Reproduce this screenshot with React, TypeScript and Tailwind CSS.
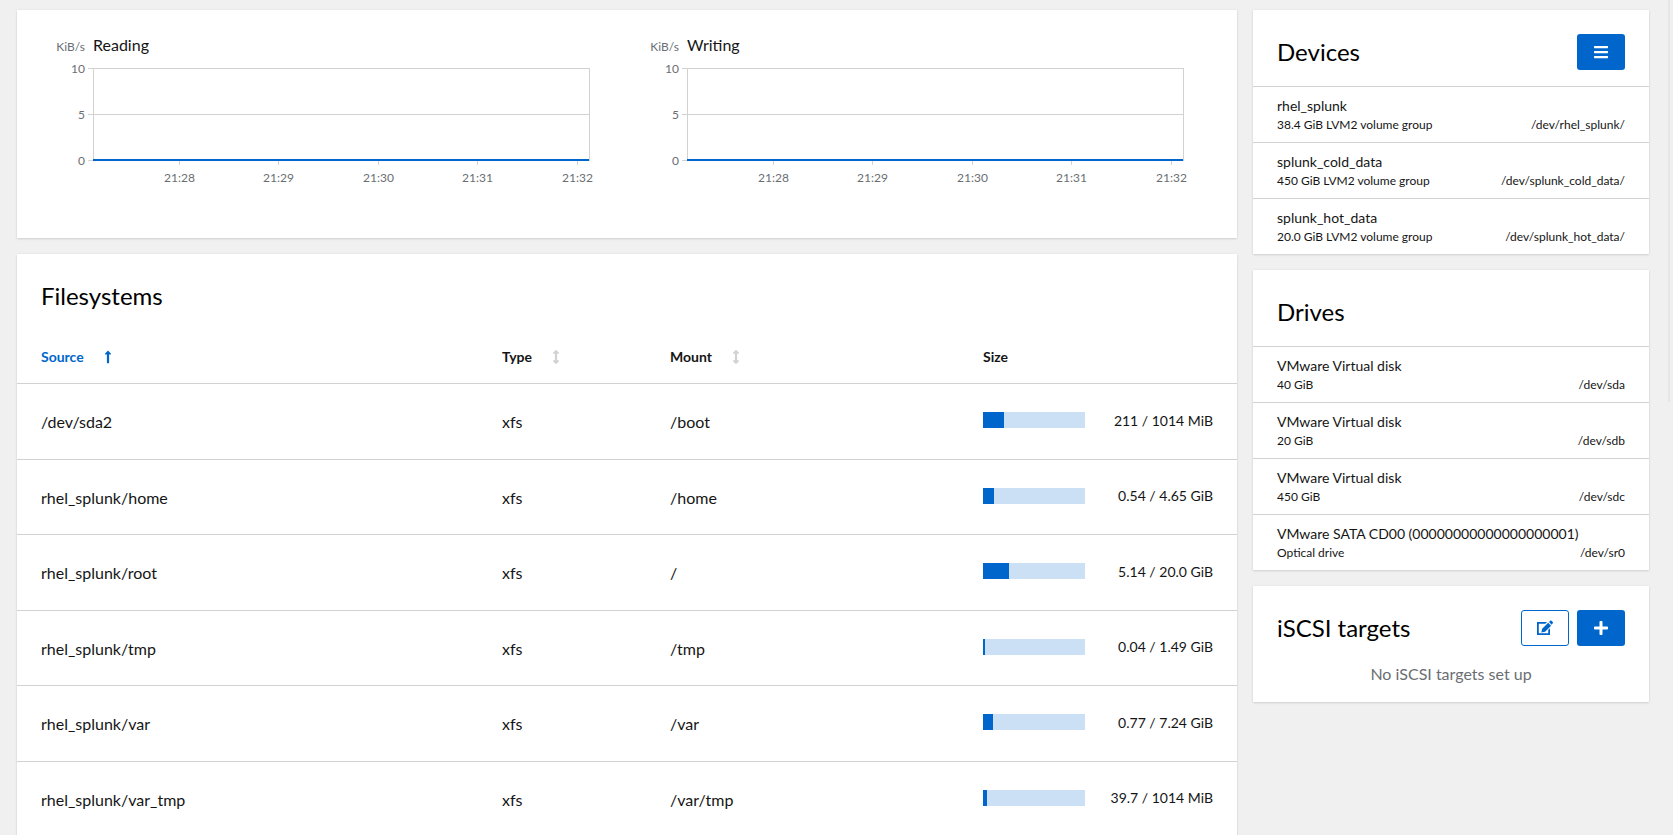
import React from "react";
import { FaArrowsAltV, FaBars, FaLongArrowAltUp, FaPlus } from "react-icons/fa";

type StorageItem = { name: string; detail: string; path: string };
type Filesystem = { source: string; type: string; mount: string; usage: number; label: string };

const devices: StorageItem[] = [
  { name: "rhel_splunk", detail: "38.4 GiB LVM2 volume group", path: "/dev/rhel_splunk/" },
  { name: "splunk_cold_data", detail: "450 GiB LVM2 volume group", path: "/dev/splunk_cold_data/" },
  { name: "splunk_hot_data", detail: "20.0 GiB LVM2 volume group", path: "/dev/splunk_hot_data/" },
];

const drives: StorageItem[] = [
  { name: "VMware Virtual disk", detail: "40 GiB", path: "/dev/sda" },
  { name: "VMware Virtual disk", detail: "20 GiB", path: "/dev/sdb" },
  { name: "VMware Virtual disk", detail: "450 GiB", path: "/dev/sdc" },
  { name: "VMware SATA CD00 (00000000000000000001)", detail: "Optical drive", path: "/dev/sr0" },
];

// usage is the used share of the filesystem, in percent
const filesystems: Filesystem[] = [
  { source: "/dev/sda2", type: "xfs", mount: "/boot", usage: 20.8, label: "211 / 1014 MiB" },
  { source: "rhel_splunk/home", type: "xfs", mount: "/home", usage: 11, label: "0.54 / 4.65 GiB" },
  { source: "rhel_splunk/root", type: "xfs", mount: "/", usage: 25.7, label: "5.14 / 20.0 GiB" },
  { source: "rhel_splunk/tmp", type: "xfs", mount: "/tmp", usage: 2.2, label: "0.04 / 1.49 GiB" },
  { source: "rhel_splunk/var", type: "xfs", mount: "/var", usage: 10, label: "0.77 / 7.24 GiB" },
  { source: "rhel_splunk/var_tmp", type: "xfs", mount: "/var/tmp", usage: 3.9, label: "39.7 / 1014 MiB" },
];

const timeTicks = [
  { x: 146.5, label: "21:28" },
  { x: 245.5, label: "21:29" },
  { x: 345.5, label: "21:30" },
  { x: 444.5, label: "21:31" },
  { x: 544.5, label: "21:32" },
];

const valueTicks = [
  { y: 42.5, label: "10" },
  { y: 88.5, label: "5" },
  { y: 134.5, label: "0" },
];

function Card({ children }: { children: React.ReactNode }) {
  return (
    <section className="bg-white shadow-[0_1px_2px_rgba(3,3,3,0.12),0_0_2px_rgba(3,3,3,0.06)]">{children}</section>
  );
}

function CardHeader({ title, children }: { title: string; children?: React.ReactNode }) {
  return (
    <div className="flex items-center justify-between px-6 pt-6 pb-4">
      <h2 className="text-2xl leading-9 text-black">{title}</h2>
      <div className="flex gap-2">{children}</div>
    </div>
  );
}

function StorageList({ items }: { items: StorageItem[] }) {
  return (
    <ul>
      {items.map((item) => (
        <li key={item.path} className="border-t border-[#d2d2d2] px-6 py-2">
          <div className="text-sm leading-[21px]">{item.name}</div>
          <div className="flex justify-between text-xs leading-[18px]">
            <span>{item.detail}</span>
            <span>{item.path}</span>
          </div>
        </li>
      ))}
    </ul>
  );
}

function RateChart({ title }: { title: string }) {
  return (
    <svg viewBox="0 0 594 196" className="block w-full" role="img" aria-label={title}>
      <g fill="#6a6e73" fontSize="12">
        <text x="52" y="25" textAnchor="end">KiB/s</text>
        {valueTicks.map((t) => (
          <text key={t.label} x="52" y={t.y + 4.5} textAnchor="end">{t.label}</text>
        ))}
        {timeTicks.map((t) => (
          <text key={t.label} x={t.x} y="156" textAnchor="middle">{t.label}</text>
        ))}
      </g>
      <text x="60" y="25" fontSize="16" fill="#151515">{title}</text>
      <g stroke="#d2d2d2" strokeWidth="1">
        {valueTicks.map((t) => (
          <line key={t.label} x1="55" x2="557" y1={t.y} y2={t.y} />
        ))}
        {timeTicks.map((t) => (
          <line key={t.label} x1={t.x} x2={t.x} y1="134" y2="139" />
        ))}
        <line x1="60.5" x2="60.5" y1="42" y2="134" />
        <line x1="556.5" x2="556.5" y1="42" y2="135" />
      </g>
      <rect x="60" y="133" width="496" height="2" fill="#0066cc" />
    </svg>
  );
}

function EditIcon() {
  return (
    <svg viewBox="0 0 16 16" className="size-4" fill="currentColor" aria-hidden="true">
      <path d="M0 2h10L8.300 3.800H1.800v9.400h9.400V10L13 8.200V15H0z" />
      <path d="M4.300 12.600l.9-3.800 6-6 2.900 2.900-6 6z" />
      <path d="M12 2l1.200-1.200a1 1 0 0 1 1.400 0l1.100 1.100a1 1 0 0 1 0 1.400L14.700 4.700z" />
    </svg>
  );
}

function SortHeader({ label, active }: { label: string; active?: boolean }) {
  return active ? (
    <button type="button" className="flex items-center gap-5 font-bold text-[#0066cc]">
      {label}
      <FaLongArrowAltUp className="h-3.5 w-2" aria-hidden="true" />
    </button>
  ) : (
    <button type="button" className="flex items-center gap-5 font-bold">
      {label}
      <FaArrowsAltV className="h-3.5 w-2 text-[#d2d2d2]" aria-hidden="true" />
    </button>
  );
}

export default function App() {
  return (
    <div className="relative flex h-screen items-start gap-4 overflow-hidden bg-[#f0f0f0] pt-2.5 pr-6 pl-[17px] font-['Lato',sans-serif] text-[#151515]">
      <main className="flex min-w-0 flex-1 flex-col gap-4">
        <Card>
          <div className="grid grid-cols-2 p-4">
            <RateChart title="Reading" />
            <RateChart title="Writing" />
          </div>
        </Card>

        <Card>
          <h2 className="px-6 pt-6 text-2xl leading-9 text-black">Filesystems</h2>
          <table className="w-full table-fixed text-left">
            <thead className="text-sm leading-[21px]">
              <tr className="border-b border-[#d2d2d2]">
                <th className="pt-8 pb-4 pl-6" aria-sort="ascending"><SortHeader label="Source" active /></th>
                <th className="w-[168px] pt-8 pb-4"><SortHeader label="Type" /></th>
                <th className="w-[313px] pt-8 pb-4"><SortHeader label="Mount" /></th>
                <th className="w-[254px] pt-8 pb-4 font-bold">Size</th>
              </tr>
            </thead>
            <tbody>
              {filesystems.map((fs) => (
                <tr key={fs.source} className="border-b border-[#d2d2d2] odd:h-[76px] even:h-[75px]">
                  <td className="pt-px pl-6">{fs.source}</td>
                  <td className="pt-px">{fs.type}</td>
                  <td className="pt-px">{fs.mount}</td>
                  <td className="pr-6 pb-[3px]">
                    <div className="flex items-center justify-between">
                      <div
                        role="progressbar"
                        aria-label={`${fs.source} usage`}
                        aria-valuenow={fs.usage}
                        className="h-4 w-[102px] bg-[#cce0f5]"
                      >
                        <div className="h-full bg-[#0066cc]" style={{ width: `${fs.usage}%` }} />
                      </div>
                      <span className="text-sm leading-[21px]">{fs.label}</span>
                    </div>
                  </td>
                </tr>
              ))}
            </tbody>
          </table>
        </Card>
      </main>

      <aside className="flex w-[396px] shrink-0 flex-col gap-4">
        <Card>
          <CardHeader title="Devices">
            <button type="button" aria-label="Device actions" className="flex h-9 w-12 items-center justify-center rounded-[3px] bg-[#0066cc] text-white">
              <FaBars className="size-4" />
            </button>
          </CardHeader>
          <StorageList items={devices} />
        </Card>

        <Card>
          <CardHeader title="Drives" />
          <StorageList items={drives} />
        </Card>

        <Card>
          <CardHeader title="iSCSI targets">
            <button type="button" aria-label="Edit initiator name" className="flex h-9 w-12 items-center justify-center rounded-[3px] border border-[#0066cc] bg-white text-[#0066cc]">
              <EditIcon />
            </button>
            <button type="button" aria-label="Add iSCSI portal" className="flex h-9 w-12 items-center justify-center rounded-[3px] bg-[#0066cc] text-white">
              <FaPlus className="size-4" />
            </button>
          </CardHeader>
          <p className="pb-4 text-center text-base text-[#6a6e73]">No iSCSI targets set up</p>
        </Card>
      </aside>

      <div className="absolute top-0 right-[3px] h-[402px] w-0.5 bg-[#e6e6e6]" />
    </div>
  );
}
